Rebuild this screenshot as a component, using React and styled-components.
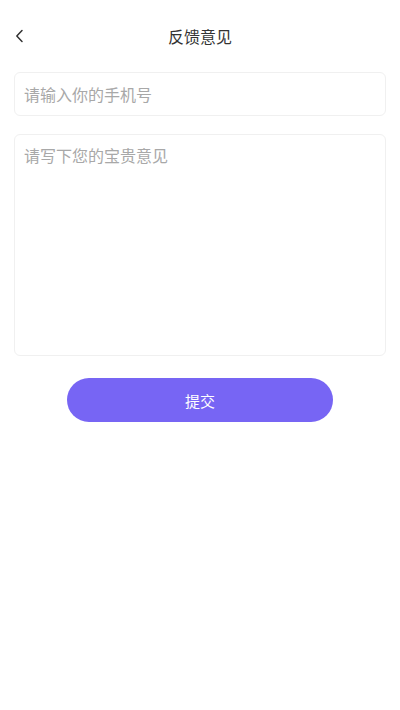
import React, { useState } from 'react';
import styled, { createGlobalStyle, css } from 'styled-components';

const GlobalStyle = createGlobalStyle`
	html, body {
		margin: 0;
		padding: 0;
		background: #fff;
		font-family: "Noto Sans CJK SC", "Noto Sans", sans-serif;
	}
	* { box-sizing: border-box; }
`;

const App = () => {
	const [phone, setPhone] = useState('');
	const [advice, setAdvice] = useState('');

	return (
		<>
			<GlobalStyle />
			<Page>
				<NavBar>
					<BackButton aria-label="返回">
						<svg width="12" height="16" viewBox="0 0 12 16" fill="none">
							<path d="M8 2.5 L2.8 8 L8 13.5" stroke="#333" strokeWidth="1.5" strokeLinecap="round" strokeLinejoin="round" />
						</svg>
					</BackButton>
					<Title>反馈意见</Title>
					<NavSpacer />
				</NavBar>

				<Form>
					<PhoneInput
						value={phone}
						onChange={e => setPhone(e.target.value)}
						placeholder="请输入你的手机号"
					/>
					<AdviceArea
						value={advice}
						onChange={e => setAdvice(e.target.value)}
						placeholder="请写下您的宝贵意见"
					/>
					<SubmitButton>提交</SubmitButton>
				</Form>
			</Page>
		</>
	);
};

export default App;

const Page = styled.div`
	width: 100%;
	min-height: 710px;
	background: #fff;
`;

const NavBar = styled.header`
	height: 72px;
	display: grid;
	grid-template-columns: 40px 1fr 40px;
	align-items: center;
	padding-bottom: 0;
`;

const BackButton = styled.button`
	justify-self: start;
	margin-left: 10px;
	width: 20px;
	height: 20px;
	padding: 0;
	border: none;
	background: none;
	display: flex;
	align-items: center;
	justify-content: center;
	cursor: pointer;
`;

const Title = styled.h1`
	margin: 0;
	text-align: center;
	font-size: 16px;
	font-weight: 400;
	color: #333;
	line-height: 1;
`;

const NavSpacer = styled.div``;

const Form = styled.div`
	display: flex;
	flex-direction: column;
	gap: 18px;
	padding: 0 14px;
`;

const field = css`
	width: 100%;
	border: 1px solid #f0f0f0;
	border-radius: 6px;
	background: #fff;
	font-family: "Noto Sans CJK SC", "Noto Sans", sans-serif;
	font-size: 16px;
	color: #333;
	outline: none;
	&::placeholder {
		color: #a8a8a8;
	}
`;

const PhoneInput = styled.input`
	${field}
	height: 44px;
	padding: 0 9px;
`;

const AdviceArea = styled.textarea`
	${field}
	height: 222px;
	padding: 8px 9px;
	resize: none;
	line-height: 24px;
`;

const SubmitButton = styled.button`
	align-self: center;
	width: 266px;
	height: 44px;
	margin-top: 4px;
	border: none;
	border-radius: 22px;
	background: #7765f4;
	color: #fff;
	font-family: "Noto Sans CJK SC", "Noto Sans", sans-serif;
	font-size: 15px;
	cursor: pointer;
`;
